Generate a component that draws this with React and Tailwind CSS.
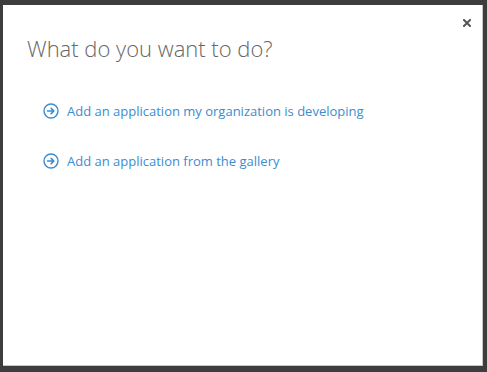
import React from "react";

function ArrowCircle() {
  return (
    <svg width="16" height="16" viewBox="0 0 16 16" className="shrink-0">
      <circle cx="8" cy="8" r="7" fill="none" stroke="#3a8dd0" strokeWidth="1.4" />
      <path d="M4.6 8h6.2M8.2 5.4L10.8 8l-2.6 2.6" fill="none" stroke="#3a8dd0" strokeWidth="1.6" strokeLinecap="round" strokeLinejoin="round" />
    </svg>
  );
}

function CloseIcon() {
  return (
    <svg width="8" height="8" viewBox="0 0 8 8">
      <path d="M1 1L7 7M7 1L1 7" stroke="#555" strokeWidth="2" strokeLinecap="square" />
    </svg>
  );
}

export default function App() {
  return (
    <div className="w-[487px] h-[372px] bg-[#3d3d3d] pt-[5px] pl-[3px]" style={{ fontFamily: '"Open Sans", "Noto Sans", sans-serif' }}>
      <div className="relative w-[480px] h-[361px] bg-white border-r border-b border-[#c8c8c8]">
        <button className="absolute left-[460px] top-[14px] flex">
          <CloseIcon />
        </button>
        <h1 className="pt-[31px] pl-[24px] text-[22px] font-light text-[#666] leading-[24px]">What do you want to do?</h1>
        <div className="pl-[40px] pt-[43px] flex flex-col gap-[34px]">
          <a className="flex items-center gap-[8px] text-[#3a8dd0] text-[13px] leading-[16px] cursor-pointer">
            <ArrowCircle />
            <span>Add an application my organization is developing</span>
          </a>
          <a className="flex items-center gap-[8px] text-[#3a8dd0] text-[13px] leading-[16px] cursor-pointer">
            <ArrowCircle />
            <span>Add an application from the gallery</span>
          </a>
        </div>
      </div>
    </div>
  );
}
